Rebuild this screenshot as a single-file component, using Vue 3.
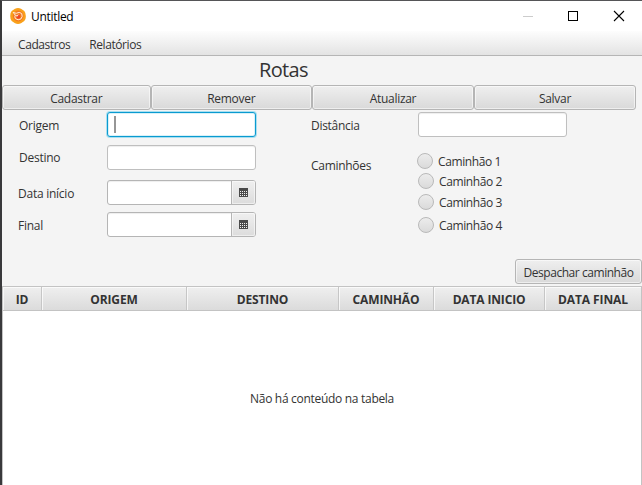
<script setup>
import { ref } from 'vue'

const menus = ['Cadastros', 'Relatórios']
const actions = ['Cadastrar', 'Remover', 'Atualizar', 'Salvar']
const trucks = [1, 2, 3, 4]
const columns = ['ID', 'ORIGEM', 'DESTINO', 'CAMINHÃO', 'DATA INICIO', 'DATA FINAL']
const selected = ref(null)
</script>

<template>
  <div class="window">
    <header class="titlebar">
      <svg class="logo" width="16" height="16" viewBox="0 0 16 16">
        <path d="M5 .7Q8-.6 11 .7L14.300 3Q15.600 4.500 15.800 8T14.300 13L11 15.300Q8 16.500 5 15.300L1.700 13Q.2 11.500.2 8T1.700 3Z" fill="#f9a11b" />
        <circle cx="8.200" cy="8" r="5.400" fill="#f47a20" />
        <circle cx="8.300" cy="8.700" r="1.900" fill="#ee4426" />
        <path d="M3.200 4.400L6.200 5.300Q9.500 3.400 11.700 5.500Q13 8.500 11 10.900Q8 12.900 5.400 10.600Q4.300 8.700 5.300 7.200L3.200 4.400M5.600 7.200L7.200 8.200L8.200 6.600" fill="none" stroke="#fff0dc" stroke-width="1" />
      </svg>
      <span class="title">Untitled</span>
      <svg class="controls" width="104" height="12" viewBox="0 0 104 12">
        <path d="M1 6.500H11" stroke="#ccc" />
        <rect x="46.500" y="1.500" width="9" height="9" fill="none" stroke="#000" />
        <path d="M92 1L102 11M102 1L92 11" stroke="#000" stroke-width="1.100" />
      </svg>
    </header>
    <nav class="menubar">
      <span v-for="m in menus" :key="m">{{ m }}</span>
    </nav>
    <h1>Rotas</h1>
    <div class="actions">
      <button v-for="a in actions" :key="a" class="btn">{{ a }}</button>
    </div>
    <main class="form">
      <section class="left">
        <div class="row origin"><label>Origem</label><div class="field focused"><i class="caret"></i></div></div>
        <div class="row destination"><label>Destino</label><div class="field"></div></div>
        <div v-for="d in ['Data início', 'Final']" :key="d" class="row date">
          <label>{{ d }}</label>
          <div class="field picker">
            <button>
              <svg width="9" height="9" viewBox="0 0 9 9" shape-rendering="crispEdges">
                <path d="M0 0H9V9H0Z" fill="#4a4a4a" />
                <path d="M1 3.500H8M1 5.500H8M1 7.500H8" stroke="#f0f0f0" stroke-dasharray="1 1" />
              </svg>
            </button>
          </div>
        </div>
      </section>
      <section class="right">
        <div class="row"><label>Distância</label><div class="field"></div></div>
        <div class="row trucks">
          <label>Caminhões</label>
          <div class="radios">
            <div v-for="n in trucks" :key="n" class="radio" @click="selected = n">
              <i class="dot" :class="{ on: selected === n }"></i><span>Caminhão {{ n }}</span>
            </div>
          </div>
        </div>
      </section>
    </main>
    <div class="dispatch"><button class="btn">Despachar caminhão</button></div>
    <div class="table">
      <div class="thead"><div v-for="c in columns" :key="c">{{ c }}</div></div>
      <div class="empty">Não há conteúdo na tabela</div>
    </div>
  </div>
</template>

<style>
body { margin: 0; overflow: hidden; }
</style>

<style scoped>
* { box-sizing: border-box; }
.window {
  width: 642px; height: 485px; overflow: hidden;
  border-left: 2px solid #39393b; border-top: 1px solid #555557;
  background: #f4f4f4; color: #333;
  font: 12px/16px "Open Sans", "Noto Sans", sans-serif;
  letter-spacing: -0.4px;
  display: flex; flex-direction: column;
}
button { font: inherit; letter-spacing: inherit; color: inherit; padding: 0; margin: 0; }
.titlebar { height: 30px; flex: none; background: #fff; display: flex; align-items: center; padding: 0 16px 0 8px; color: #000; }
.logo { margin-top: -1px; }
.title { margin-left: 5px; padding-top: 1px; letter-spacing: -0.3px; }
.controls { margin-left: auto; }
.menubar {
  height: 25px; flex: none; padding: 6px 0 0 16px; display: flex; gap: 19px;
  background: linear-gradient(#fdfdfd, #e3e3e3); border-bottom: 1px solid #b5b5b5;
}
.menubar span { letter-spacing: -0.42px; }
h1 { margin: 0; height: 29px; flex: none; font-size: 20px; line-height: 28px; font-weight: 400; letter-spacing: -0.65px; padding-left: 257px; }
.actions { display: grid; grid-template-columns: 148.500px 161.500px 162px 162px; height: 25px; flex: none; }
.btn {
  height: 25px; border: 1px solid #b5b5b5; border-radius: 3px; padding-top: 2px;
  background: linear-gradient(#efefef, #d9d9d9); box-shadow: inset 0 0 0 1px rgba(255,255,255,.55);
}
.form { display: flex; height: 149px; flex: none; padding-top: 2px; }
.left { width: 309px; padding-left: 16px; letter-spacing: -0.25px; }
.right { flex: 1; letter-spacing: -0.3px; }
.row { display: flex; align-items: center; height: 25px; }
.row label { padding-top: 2px; }
.left label { width: 89px; }
.right label { width: 107px; }
.origin label, .destination label { padding-left: 1px; }
.field { width: 149px; height: 25px; background: #fff; border: 1px solid #bfbfbf; border-radius: 3px; box-shadow: inset 0 1px 1px #eee; }
.focused { border-color: #0a9ad0; box-shadow: 0 0 0 1px #a9dff0, inset 0 0 0 1px #d8f1f8; padding: 3px 0 0 6px; }
.caret { display: block; width: 2px; height: 17px; background: #969696; }
.destination { margin: 8px 0 10px; }
.destination label { padding-top: 1px; padding-bottom: 1px; }
.date { margin-bottom: 7px; }
.picker { display: flex; justify-content: flex-end; border-color: #b5b5b5; }
.picker button {
  width: 24px; border: 0; border-left: 1px solid #b5b5b5; border-radius: 0 2px 2px 0;
  display: flex; align-items: center; justify-content: center;
  background: linear-gradient(#efefef, #dcdcdc); box-shadow: inset 0 0 0 1px rgba(255,255,255,.5);
}
.trucks { align-items: flex-start; height: auto; margin-top: 16px; }
.trucks label { padding-top: 5px; }
.radio { display: flex; align-items: center; height: 16px; gap: 5px; margin-bottom: 5px; letter-spacing: -0.4px; }
.radio span { padding-top: 1px; }
.radio:first-child { margin-left: -1px; margin-bottom: 4px; }
.radio:nth-child(3) { margin-bottom: 7px; }
.dot { width: 16px; height: 16px; border: 1px solid #b9b9b9; border-radius: 50%; background: linear-gradient(#ececec, #dadada); }
.dot.on { background: radial-gradient(#333 0 3px, #e3e3e3 4px); }
.dispatch { display: flex; justify-content: flex-end; height: 27px; flex: none; }
.dispatch .btn { width: 127px; letter-spacing: -0.45px; }
.actions .btn { letter-spacing: -0.3px; }
.table { flex: 1; display: flex; flex-direction: column; background: #fff; border: 1px solid #c3c3c3; border-bottom: 0; }
.thead { display: grid; grid-template-columns: 39px 145px 152px 95px 111px 1fr; height: 24px; flex: none; font-weight: 700; text-align: center; border-bottom: 1px solid #c3c3c3; letter-spacing: -0.15px; }
.thead div { border-right: 1px solid #c6c6c6; background: linear-gradient(#efefef, #dbdbdb); box-shadow: inset 1px 1px 0 rgba(255,255,255,.7); height: 23px; line-height: 25px; }
.thead div:last-child { border-right: 0; letter-spacing: -0.1px; }
.empty { flex: 1; display: flex; align-items: center; justify-content: center; padding-top: 2px; letter-spacing: -0.3px; }
</style>
